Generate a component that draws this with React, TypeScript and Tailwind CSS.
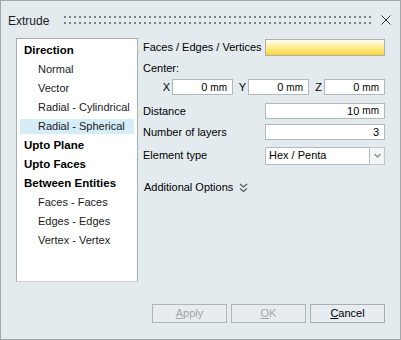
import React from 'react';

const font = { fontFamily: '"Liberation Sans", Arial, sans-serif' };

const items: { label: string; bold?: boolean; selected?: boolean }[] = [
  { label: 'Direction', bold: true },
  { label: 'Normal' },
  { label: 'Vector' },
  { label: 'Radial - Cylindrical' },
  { label: 'Radial - Spherical', selected: true },
  { label: 'Upto Plane', bold: true },
  { label: 'Upto Faces', bold: true },
  { label: 'Between Entities', bold: true },
  { label: 'Faces - Faces' },
  { label: 'Edges - Edges' },
  { label: 'Vertex - Vertex' },
];

const Grip = () => {
  const dots = [];
  for (let i = 0; i < 62; i++) {
    dots.push(<rect key={'a' + i} x={i * 5} y={1} width={2} height={2} fill="#7c8186" />);
    dots.push(<rect key={'b' + i} x={i * 5} y={7} width={2} height={2} fill="#7c8186" />);
  }
  return (
    <svg width="310" height="10" className="ml-[15px]">
      {dots}
    </svg>
  );
};

const Field = ({ value, className = '' }: { value: string; className?: string }) => (
  <div className={`h-[16px] bg-white border border-[#b3b8be] flex items-center justify-end pr-[5px] text-[11px] text-black ${className}`}>
    {value}
    <span className="ml-[3px] text-[10px]">mm</span>
  </div>
);

const Coord = ({ axis }: { axis: string }) => (
  <div className="flex items-center">
    <span className="w-[15px] text-right pr-[2px] text-[11px]">{axis}</span>
    <Field value="0" className="w-[61px]" />
  </div>
);

export default function App() {
  return (
    <div style={font} className="w-[401px] h-[340px] bg-[#e4ebef] border border-[#a3a8ad] flex flex-col text-[#111] select-none">
      {/* title bar */}
      <div className="h-[37px] flex items-center pl-[7px] pr-[9px]">
        <span className="text-[12px] text-[#1b1b1b] mt-[2px]">Extrude</span>
        <Grip />
        <svg width="10" height="10" viewBox="0 0 10 10" className="ml-auto mt-[1px]">
          <path d="M0.5 0.5 L9.5 9.5 M9.5 0.5 L0.5 9.5" stroke="#333" strokeWidth="1" fill="none" />
        </svg>
      </div>

      {/* body */}
      <div className="h-[244px] flex pl-[15px]">
        <div className="w-[122px] h-full bg-white border border-[#a9aeb4] border-b-[#cfd3d7] pt-[4px]">
          <div className="flex flex-col gap-[4px]">
            {items.map((it) => (
              <div
                key={it.label}
                className={`mx-[3px] h-[15px] leading-[15px] whitespace-nowrap ${
                  it.bold ? 'pl-[4px] font-bold text-[11.5px] text-black' : 'pl-[18px] text-[11px] text-[#1a1a1a]'
                } ${it.selected ? 'bg-[#d6edf8]' : ''}`}
              >
                {it.label}
              </div>
            ))}
          </div>
        </div>

        <div className="flex-1 pl-[5px] pr-[15px] text-[11px] text-black">
          <div className="mt-[1px] h-[17px] flex items-center justify-between">
            <span>Faces / Edges / Vertices</span>
            <div className="w-[120px] h-[17px] border border-[#a9b0b8] bg-[linear-gradient(to_bottom,#fffdf0_0%,#fff3b0_35%,#fde56c_70%,#f8d43c_100%)]" />
          </div>
          <div className="mt-[5px] h-[14px] leading-[14px]">Center:</div>
          <div className="mt-[4px] flex justify-end">
            <Coord axis="X" />
            <Coord axis="Y" />
            <Coord axis="Z" />
          </div>
          <div className="mt-[7px] flex items-center justify-between">
            <span>Distance</span>
            <Field value="10" className="w-[120px]" />
          </div>
          <div className="mt-[5px] flex items-center justify-between">
            <span>Number of layers</span>
            <div className="w-[120px] h-[16px] bg-white border border-[#b3b8be] flex items-center justify-end pr-[5px]">3</div>
          </div>
          <div className="mt-[6px] flex items-center justify-between">
            <span>Element type</span>
            <div className="w-[120px] h-[18px] flex">
              <div className="flex-1 bg-white border border-[#b3b8be] flex items-center pl-[3px]">Hex / Penta</div>
              <div className="w-[15px] bg-[#f3f5f6] border border-l-0 border-[#c2c6ca] flex items-center justify-center">
                <svg width="7" height="5" viewBox="0 0 7 5">
                  <path d="M0.5 1 L3.5 4 L6.5 1" stroke="#8a8e92" strokeWidth="1.3" fill="none" />
                </svg>
              </div>
            </div>
          </div>
          <div className="mt-[16px] pl-[1px] h-[14px] flex items-center">
            <span>Additional Options</span>
            <svg width="9" height="10" viewBox="0 0 9 10" className="ml-[6px]">
              <path d="M1 1 L4.5 4 L8 1 M1 5.5 L4.5 8.5 L8 5.5" stroke="#555" strokeWidth="1.1" fill="none" />
            </svg>
          </div>
        </div>
      </div>

      {/* buttons */}
      <div className="mt-[22px] flex justify-end gap-[4px] pr-[15px] text-[11px]">
        <button className="w-[75px] h-[19px] bg-[#e6ecef] border border-[#b0b5ba] text-[#a3a6a9]">
          <span className="underline underline-offset-1">A</span>pply
        </button>
        <button className="w-[75px] h-[19px] bg-[#e6ecef] border border-[#b0b5ba] text-[#a3a6a9]">
          <span className="underline underline-offset-1">O</span>K
        </button>
        <button className="w-[75px] h-[19px] bg-[#e6ecef] border border-[#a9aeb3] text-black">
          <span className="underline underline-offset-1">C</span>ancel
        </button>
      </div>
    </div>
  );
}
